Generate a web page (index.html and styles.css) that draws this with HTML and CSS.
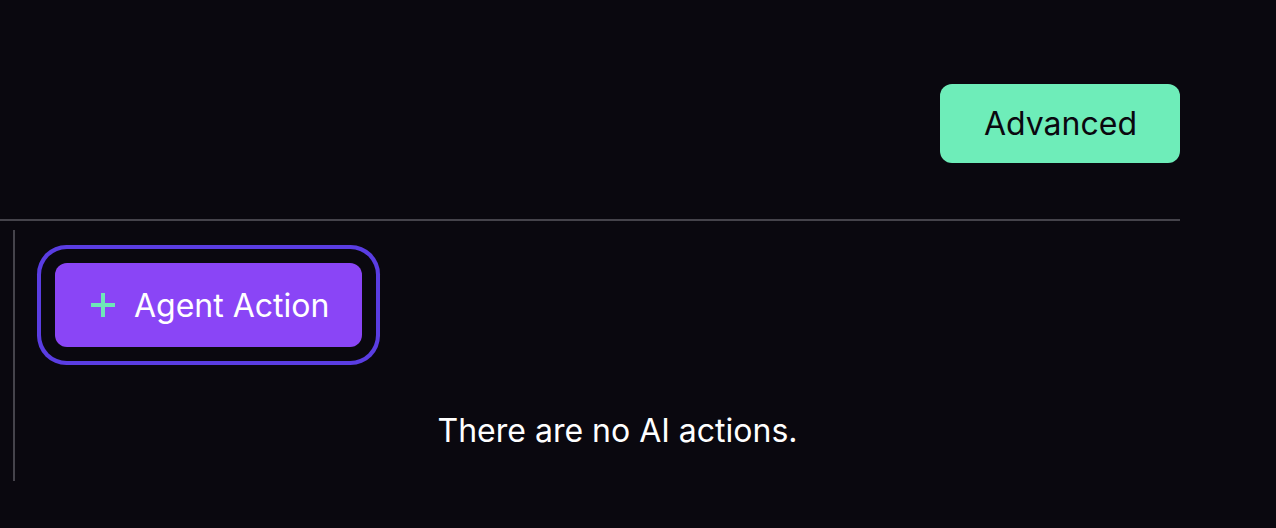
FILE: index.html
```html
<!DOCTYPE html>
<html>
<head>
<meta charset="utf-8">
<link rel="stylesheet" href="styles.css">
</head>
<body>
<div class="page">
  <div class="toolbar">
    <button class="btn-advanced">Advanced</button>
  </div>
  <div class="divider"></div>
  <div class="panel">
    <div class="panel-inner">
      <div class="actions-row">
        <button class="btn-agent">
          <svg class="plus" width="26" height="26" viewBox="0 0 26 26" aria-hidden="true">
            <path d="M13 1v24M1 13h24" stroke="#6ee7b7" stroke-width="4" fill="none"/>
          </svg>
          <span>Agent Action</span>
        </button>
      </div>
      <p class="empty">There are no AI actions.</p>
    </div>
  </div>
</div>
</body>
</html>
```

FILE: styles.css
```css
html, body {
  margin: 0;
  padding: 0;
  background: #0a080f;
  height: 100%;
}
body {
  font-family: Inter, "Noto Sans", sans-serif;
  color: #ffffff;
}
.page {
  width: 1180px;
}
.toolbar {
  display: flex;
  justify-content: flex-end;
  align-items: flex-start;
  padding-top: 84px;
  height: 219px;
  box-sizing: border-box;
}
.btn-advanced {
  height: 79px;
  padding: 0 43px 0 44px;
  border: none;
  border-radius: 12px;
  background: #6eedb9;
  color: #0a080f;
  font-family: inherit;
  font-size: 32px;
}
.divider {
  height: 2px;
  background: #45434b;
}
.panel {
  margin-top: 9px;
  border-left: 2px solid #45434b;
  margin-left: 13px;
  height: 251px;
}
.panel-inner {
  padding-left: 40px;
  padding-top: 33px;
}
.actions-row {
  display: flex;
}
.btn-agent {
  display: flex;
  align-items: center;
  gap: 18px;
  height: 84px;
  padding: 0 33px 0 35px;
  border: none;
  border-radius: 12px;
  background: #8a45f6;
  color: #ffffff;
  font-family: inherit;
  font-size: 32px;
  box-shadow: 0 0 0 14px #0a080f, 0 0 0 18px #5a3de2;
}
.plus {
  flex: none;
}
.empty {
  margin: 64px 0 0 0;
  text-align: center;
  font-size: 32px;
  line-height: 40px;
}
```
